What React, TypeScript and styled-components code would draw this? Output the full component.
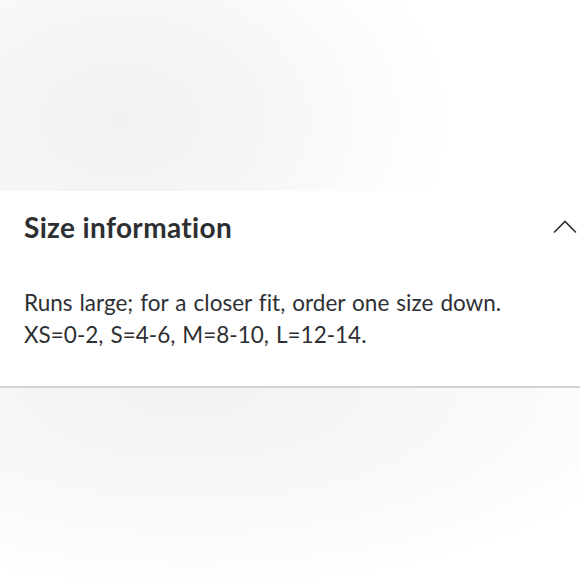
import styled, { createGlobalStyle } from 'styled-components'

//-----------------------------------------------------------------------------
// Global
//-----------------------------------------------------------------------------
const GlobalStyle = createGlobalStyle`
  html, body {
    margin: 0;
    padding: 0;
    background: #ffffff;
  }
  body {
    font-family: Lato, "Open Sans", sans-serif;
    color: #2e2f32;
    font-variant-ligatures: none;
  }
`

//-----------------------------------------------------------------------------
// Component
//-----------------------------------------------------------------------------
const App = (): JSX.Element => {
  return (
    <Page>
      <GlobalStyle />
      <TopShade />
      <Panel>
        <Header>
          <Title>Size information</Title>
          <Chevron width="24" height="14" viewBox="0 0 24 14" aria-hidden="true">
            <path d="M1 12.5 L12 1.5 L23 12.5" fill="none" stroke="#2e2f32" strokeWidth="1.6" />
          </Chevron>
        </Header>
        <Body>
          <Line>Runs large; for a closer fit, order one size down.</Line>
          <Line>XS=0-2, S=4-6, M=8-10, L=12-14.</Line>
        </Body>
      </Panel>
      <BottomShade />
    </Page>
  )
}

//-----------------------------------------------------------------------------
// Styled Components
//-----------------------------------------------------------------------------
const Page = styled.div`
  width: 580px;
  height: 580px;
  overflow: hidden;
  display: flex;
  flex-direction: column;
`
const TopShade = styled.div`
  height: 191px;
  flex-shrink: 0;
  background: radial-gradient(
    ellipse 330px 240px at 120px 120px,
    #f1f1f1 0%,
    #f6f6f6 45%,
    #fcfcfc 80%,
    #ffffff 100%
  );
`
const Panel = styled.section`
  background: #ffffff;
  padding: 0 0 0 24px;
  border-bottom: 2px solid #d2d2d2;
  height: 197px;
  box-sizing: border-box;
`
const Header = styled.div`
  height: 72px;
  display: flex;
  align-items: center;
  justify-content: space-between;
`
const Title = styled.h2`
  margin: 0;
  font-size: 28px;
  font-weight: 700;
  letter-spacing: 0.35px;
`
const Chevron = styled.svg`
  margin-right: 3px;
  margin-top: 0;
`
const Body = styled.div`
  padding-top: 24px;
`
const Line = styled.p`
  margin: 0;
  font-size: 22.5px;
  line-height: 32px;
  word-spacing: 1.3px;
`
const BottomShade = styled.div`
  flex: 1;
  background: radial-gradient(
    ellipse 480px 200px at 190px 0px,
    #f2f2f2 0%,
    #f8f8f8 55%,
    #fcfcfc 85%,
    #ffffff 100%
  );
`

export default App
